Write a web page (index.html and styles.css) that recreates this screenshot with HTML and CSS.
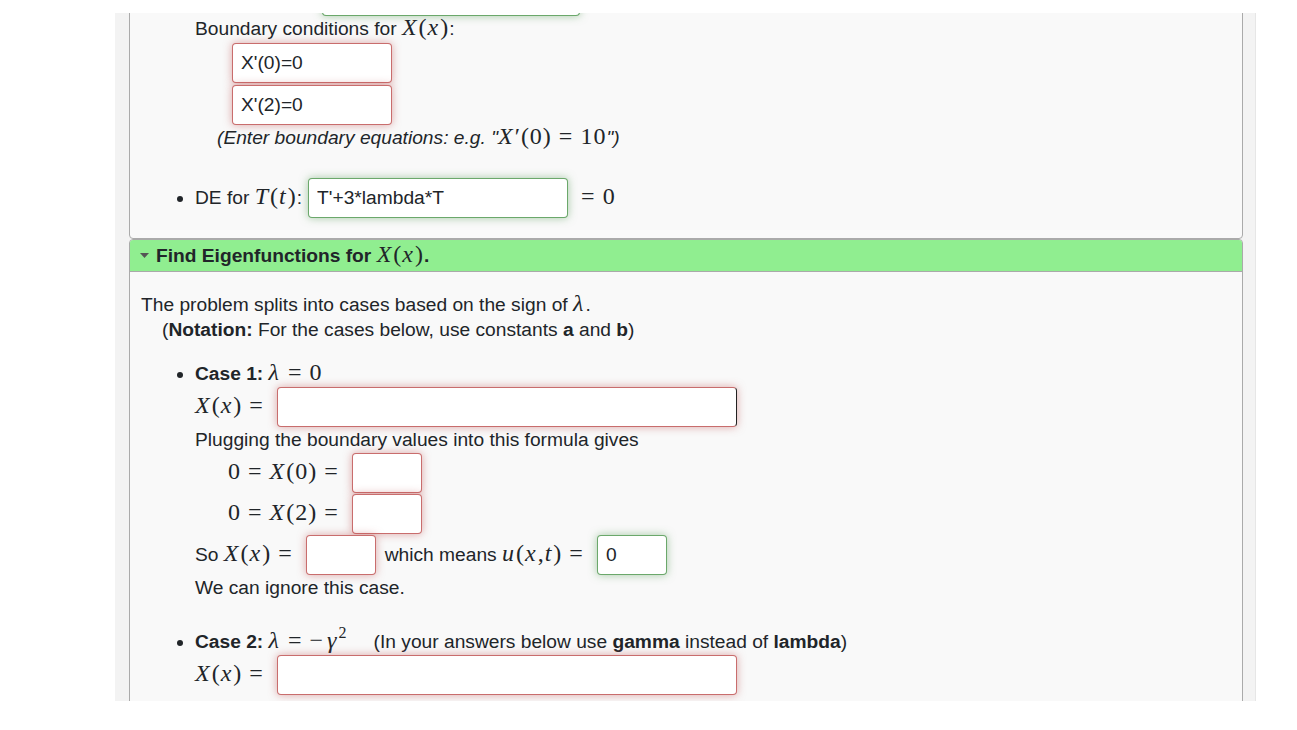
FILE: index.html
```html
<!DOCTYPE html>
<html lang="en">
<head>
    <meta charset="UTF-8">
    <meta name="viewport" content="width=device-width, initial-scale=1.0">
    <title>Separation of variables</title>
    <link rel="stylesheet" href="styles.css">
</head>
<body>
    <div class="frame">
        <div class="panel first">
            <ul class="items">
                <li class="clipped">
                    <div class="row">
                        <input class="ans ok de-x" type="text">
                    </div>
                    <p class="line">Boundary conditions for <span class="m"><i>X</i>(<i>x</i>)</span>:</p>
                    <input class="ans bad bc" type="text" value="X'(0)=0">
                    <input class="ans bad bc" type="text" value="X'(2)=0">
                    <p class="line note"><em>(Enter boundary equations: e.g. "<span class="m"><i>X</i>′(0)<span class="eq">=</span>10</span>")</em></p>
                </li>
                <li class="next">
                    <div class="row">
                        <span class="lbl">DE for <span class="m"><i>T</i>(<i>t</i>)</span>:</span>
                        <input class="ans ok de-t" type="text" value="T'+3*lambda*T">
                        <span class="lbl"><span class="m"><span class="eq">=</span>0</span></span>
                    </div>
                </li>
            </ul>
        </div>

        <details class="panel section" open>
            <summary class="head">
                <svg class="caret" width="9" height="6" viewBox="0 0 9 6"><polygon points="0,0 9,0 4.5,5" fill="#555"/></svg>
                <span>Find Eigenfunctions for <span class="m"><i>X</i>(<i>x</i>)</span>.</span>
            </summary>
            <div class="body">
                <p class="line">The problem splits into cases based on the sign of <span class="m"><i>λ</i></span>.</p>
                <p class="line notation">(<b>Notation:</b> For the cases below, use constants <b>a</b> and <b>b</b>)</p>

                <ul class="items cases">
                    <li>
                        <p class="line"><b>Case 1:</b> <span class="m"><i>λ</i><span class="eq">=</span>0</span></p>
                        <div class="row">
                            <span class="lbl"><span class="m"><i>X</i>(<i>x</i>)<span class="eq">=</span></span></span>
                            <input class="ans bad wide edge" type="text">
                        </div>
                        <p class="line">Plugging the boundary values into this formula gives</p>
                        <div class="row indent">
                            <span class="lbl"><span class="m">0<span class="eq">=</span><i>X</i>(0)<span class="eq">=</span></span></span>
                            <input class="ans bad small" type="text">
                        </div>
                        <div class="row indent">
                            <span class="lbl"><span class="m">0<span class="eq">=</span><i>X</i>(2)<span class="eq">=</span></span></span>
                            <input class="ans bad small" type="text">
                        </div>
                        <div class="row">
                            <span class="lbl">So <span class="m"><i>X</i>(<i>x</i>)<span class="eq">=</span></span></span>
                            <input class="ans bad small" type="text">
                            <span class="lbl means">which means <span class="m"><i>u</i>(<i>x</i>,<i>t</i>)<span class="eq">=</span></span></span>
                            <input class="ans ok small" type="text" value="0">
                        </div>
                        <p class="line">We can ignore this case.</p>
                    </li>
                    <li>
                        <p class="line"><b>Case 2:</b> <span class="m"><i>λ</i><span class="eq">=</span><span class="neg">−</span><i>γ</i><sup>2</sup></span><span class="hint">(In your answers below use <b>gamma</b> instead of <b>lambda</b>)</span></p>
                        <div class="row">
                            <span class="lbl"><span class="m"><i>X</i>(<i>x</i>)<span class="eq">=</span></span></span>
                            <input class="ans bad wide" type="text">
                        </div>
                        <p class="line">Plugging the boundary values into this formula gives</p>
                    </li>
                </ul>
            </div>
        </details>
    </div>
</body>
</html>
```

FILE: styles.css
```css
* {
    box-sizing: border-box;
    margin: 0;
    padding: 0;
}

body {
    font-family: "Liberation Sans", Arial, sans-serif;
    font-size: 19.2px;
    color: #212529;
    background: #fff;
}

/* visible part of the problem page */
.frame {
    margin: 13px 0 0 115px;
    width: 1141px;
    height: 688px;
    overflow: hidden;
    background: #f3f3f3;
    padding: 0 12px 0 14px;
    border-right: 1px solid #e6e6e6;
}

.panel {
    background: #f9f9f9;
    border: 1px solid #aaa;
    border-radius: 4px;
}

.first {
    margin-top: -39px;
    padding: 0 11px 20px;
}

.items {
    padding-left: 54px;
}

.clipped {
    list-style: none;
}

.items > li + li.next {
    margin-top: 27px;
}

.line {
    line-height: 25px;
}

.lbl {
    line-height: 25px;
    white-space: nowrap;
}

.row {
    display: flex;
    align-items: center;
    gap: 6px;
    height: 41px;
}

.indent {
    padding-left: 33px;
}

.note {
    padding-left: 22px;
}

.notation {
    padding-left: 21px;
}

/* math */
.m {
    font-family: "Liberation Serif", "Times New Roman", serif;
    font-size: 24px;
    font-style: normal;
    font-weight: normal;
    letter-spacing: 1px;
    line-height: 0;
}

.m i {
    font-style: italic;
    letter-spacing: 2px;
}

.m .eq {
    margin: 0 7px;
}

.m .neg {
    margin: 0 3px 0 0;
}

.m sup {
    font-size: 16px;
    vertical-align: 10px;
    line-height: 0;
}

/* answer blanks */
.ans {
    height: 40px;
    padding: 0 8px;
    font: inherit;
    color: #212529;
    background: #fff;
    border: 1px solid #ccc;
    border-radius: 4px;
    outline: none;
}

.bad {
    border-color: rgba(191, 84, 84, 0.85);
    box-shadow: 0 0 8px rgba(191, 84, 84, 0.5);
}

.ok {
    border-color: rgba(81, 153, 81, 0.85);
    box-shadow: 0 0 8px rgba(81, 153, 81, 0.5);
}

.edge {
    border-right-color: #222;
}

.de-x {
    width: 258px;
    margin-left: 127px;
}

.de-t {
    width: 260px;
}

.bc {
    display: block;
    width: 160px;
    margin: 2px 0 0 37px;
}

.wide {
    width: 460px;
}

.small {
    width: 70px;
}

.means {
    margin-left: 3px;
}

.hint {
    margin-left: 26px;
}

/* collapsible section */
.section {
    padding: 0;
}

.head {
    display: flex;
    align-items: center;
    gap: 7px;
    height: 32px;
    padding-left: 10px;
    background: #90ee90;
    border-bottom: 1px solid #aaa;
    border-radius: 3px 3px 0 0;
    font-weight: bold;
    list-style: none;
    cursor: pointer;
}

.head::-webkit-details-marker {
    display: none;
}

.caret {
    flex: none;
}

.body {
    padding: 20px 11px 0;
}

.cases {
    margin-top: 19px;
}

.cases > li + li {
    margin-top: 29px;
}
```
